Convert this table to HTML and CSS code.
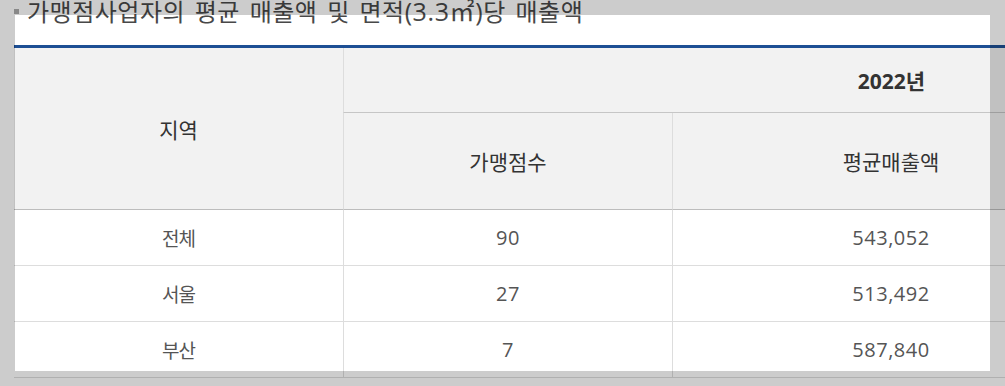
FILE: index.html
```html
<!DOCTYPE html>
<html lang="ko">
<head>
<meta charset="utf-8">
<title>가맹점사업자의 평균 매출액</title>
<link rel="stylesheet" href="styles.css">
</head>
<body>
<div class="page">
  <h3 class="title"><span class="bullet"></span><span class="title-text">가맹점사업자의 평균 매출액 및 면적<span class="unit">(3.3㎡)</span>당 매출액</span></h3>
  <table class="stats">
    <colgroup>
      <col class="c-region">
      <col class="c-count">
      <col class="c-sales">
      <col class="c-area">
    </colgroup>
    <thead>
      <tr class="h1">
        <th rowspan="2" class="first">지역</th>
        <th colspan="3" class="year">2022년</th>
      </tr>
      <tr class="h2">
        <th>가맹점수</th>
        <th>평균매출액</th>
        <th>면적(3.3㎡)당 평균매출액</th>
      </tr>
    </thead>
    <tbody>
      <tr>
        <td class="first ko">전체</td>
        <td class="num">90</td>
        <td class="num">543,052</td>
        <td class="num">18,412</td>
      </tr>
      <tr>
        <td class="first ko">서울</td>
        <td class="num">27</td>
        <td class="num">513,492</td>
        <td class="num">17,906</td>
      </tr>
      <tr>
        <td class="first ko">부산</td>
        <td class="num">7</td>
        <td class="num">587,840</td>
        <td class="num">19,215</td>
      </tr>
    </tbody>
  </table>
</div>
<div class="shade"></div>
</body>
</html>
```

FILE: styles.css
```css
html, body {
  margin: 0;
  padding: 0;
  overflow: hidden;
  background: #ffffff;
}

.page {
  padding-left: 14px;
  font-family: "Open Sans", "Noto Sans CJK KR", sans-serif;
}

.title {
  display: flex;
  align-items: flex-start;
  height: 24px;
  overflow: visible;
  margin: -1px 0 22px 0;
  font-size: 24px;
  line-height: 24px;
  font-weight: normal;
  color: #484848;
  white-space: nowrap;
}

.title-text {
  letter-spacing: 0.5px;
  word-spacing: 3px;
}

.title .unit {
  font-size: 25px;
  letter-spacing: 0.6px;
}

.bullet {
  display: inline-block;
  flex: none;
  width: 5px;
  height: 5px;
  background: #aaaaaa;
  margin: 10px 8px 0 0;
}

.stats {
  table-layout: fixed;
  width: 1425px;
  border-collapse: separate;
  border-spacing: 0;
  border-top: 3px solid #1d4f94;
}

.c-region { width: 329px; }
.c-count { width: 329px; }
.c-sales { width: 437px; }
.c-area { width: 330px; }

.stats th,
.stats td {
  padding: 0;
  text-align: center;
  vertical-align: middle;
  border-left: 1px solid #dddddd;
}

.stats th.first,
.stats td.first {
  border-left: none;
}

.stats thead th {
  background: #f2f2f2;
  color: #333333;
  font-size: 21px;
  font-weight: normal;
}

.stats .h1 th {
  height: 64px;
}

.stats .h1 th.year {
  font-weight: bold;
  border-bottom: 1px solid #c6c6c6;
}

.stats .h2 th {
  height: 96px;
}

.stats thead th.first,
.stats .h2 th {
  border-bottom: 1px solid #bdbdbd;
}

.stats tbody td {
  height: 55px;
  border-bottom: 1px solid #dddddd;
  color: #555555;
}

.stats td.ko {
  font-family: "Noto Sans CJK KR", sans-serif;
  font-size: 19px;
  letter-spacing: -1px;
}

.stats td.num {
  font-family: "Open Sans", sans-serif;
  font-size: 20px;
  letter-spacing: 0.5px;
}

.shade {
  position: fixed;
  left: 15px;
  top: 15px;
  width: 975px;
  height: 356px;
  box-shadow: 0 0 0 3000px rgba(0, 0, 0, 0.2);
  pointer-events: none;
}
```
